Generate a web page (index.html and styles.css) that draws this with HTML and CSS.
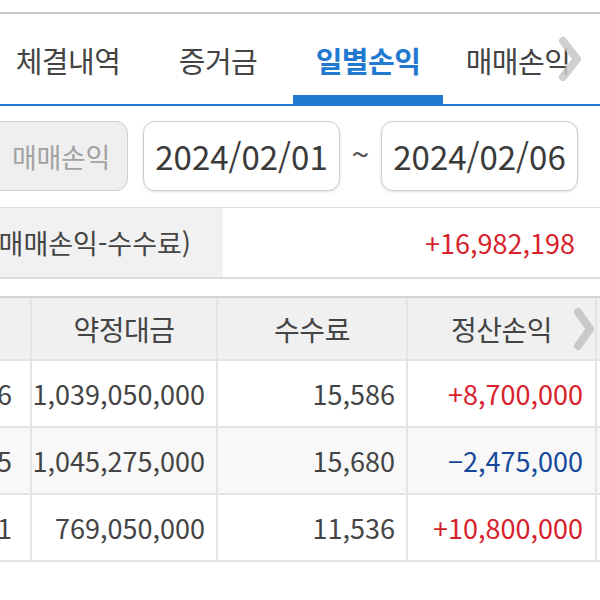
FILE: index.html
```html
<!DOCTYPE html>
<html lang="ko">
<head>
<meta charset="utf-8">
<link rel="stylesheet" href="styles.css">
</head>
<body>
<div class="page">
  <div class="topgap"></div>
  <nav class="tabs">
    <div class="tab-strip">
      <div class="tab">체결내역</div>
      <div class="tab">증거금</div>
      <div class="tab active">일별손익</div>
      <div class="tab">매매손익</div>
    </div>
    <svg class="tab-more" width="26" height="46" viewBox="0 0 26 46"><polyline points="6,5 20,23 6,41" fill="none" stroke="#c8c8c8" stroke-width="8" stroke-linecap="round" stroke-linejoin="round" opacity="0.85"/></svg>
  </nav>

  <div class="date-row">
    <div class="kind-btn"><span>매매손익</span></div>
    <div class="date-box">2024/02/01</div>
    <div class="tilde">~</div>
    <div class="date-box">2024/02/06</div>
  </div>

  <div class="summary">
    <div class="sum-label"><span>정산손익(매매손익-수수료)</span></div>
    <div class="sum-value up">+16,982,198</div>
  </div>

  <div class="table-wrap">
    <div class="grid">
      <div class="cell head first"></div>
      <div class="cell head">약정대금</div>
      <div class="cell head">수수료</div>
      <div class="cell head">정산손익</div>
      <div class="cell head edge"></div>

      <div class="cell first"><span>2024/02/06</span></div>
      <div class="cell num">1,039,050,000</div>
      <div class="cell num">15,586</div>
      <div class="cell num up">+8,700,000</div>
      <div class="cell edge"></div>

      <div class="cell first alt"><span>2024/02/05</span></div>
      <div class="cell num alt">1,045,275,000</div>
      <div class="cell num alt">15,680</div>
      <div class="cell num alt down">−2,475,000</div>
      <div class="cell edge alt"></div>

      <div class="cell first"><span>2024/02/01</span></div>
      <div class="cell num">769,050,000</div>
      <div class="cell num">11,536</div>
      <div class="cell num up">+10,800,000</div>
      <div class="cell edge"></div>
    </div>
    <svg class="col-more" width="24" height="42" viewBox="0 0 24 42"><polyline points="6,4 18,21 6,38" fill="none" stroke="#c4c4c4" stroke-width="8" stroke-linecap="round" stroke-linejoin="round" opacity="0.9"/></svg>
  </div>
</div>
</body>
</html>
```
FILE: styles.css
```css
* { box-sizing: border-box; }
html, body { margin: 0; padding: 0; background: #fff; }
body {
  width: 600px;
  height: 600px;
  overflow: hidden;
  font-family: "Noto Sans CJK KR", "Noto Sans", sans-serif;
  color: #444;
}
.page { width: 600px; }
.topgap { height: 12px; }

.tabs {
  position: relative;
  height: 94px;
  border-top: 2px solid #c8c8c8;
  border-bottom: 2px solid #2079d0;
  overflow: hidden;
}
.tab-strip {
  display: flex;
  height: 100%;
  margin-left: -7px;
}
.tab {
  flex: 0 0 150px;
  display: flex;
  align-items: center;
  justify-content: center;
  padding-top: 2px;
  font-size: 29px;
  letter-spacing: -0.5px;
  color: #444;
}
.tab.active {
  color: #1f7ad0;
  font-weight: 700;
  box-shadow: inset 0 -9px 0 #2079d0;
}
.tab-more {
  position: absolute;
  right: 17px;
  top: 22px;
}

.date-row {
  display: flex;
  align-items: center;
  height: 70px;
  margin-top: 15px;
  margin-left: -12px;
}
.kind-btn {
  width: 140px;
  height: 70px;
  border: 1px solid #cfcfcf;
  border-radius: 12px;
  background: #efefef;
  display: flex;
  align-items: center;
  padding-left: 23px;
  font-size: 27px;
  letter-spacing: -0.3px;
  color: #a2a2a2;
  margin-right: 15px;
}
.date-box {
  width: 197px;
  height: 70px;
  border: 1px solid #cdcdcd;
  border-radius: 12px;
  background: #fff;
  box-shadow: 0 1px 3px rgba(0,0,0,0.12);
  display: flex;
  align-items: center;
  justify-content: center;
  font-size: 33px;
  color: #3a3a3a;
}
.tilde {
  width: 41px;
  text-align: center;
  font-size: 32px;
  line-height: 1;
  padding-bottom: 6px;
  color: #555;
}

.summary {
  display: flex;
  height: 72px;
  margin-top: 16px;
  border-top: 1px solid #dedede;
  border-bottom: 2px solid #dcdcdc;
}
.sum-label {
  width: 223px;
  background: #f1f1f1;
  display: flex;
  justify-content: flex-end;
  align-items: center;
  overflow: hidden;
  white-space: nowrap;
  padding-right: 32px;
  font-size: 27px;
  letter-spacing: 0;
  color: #444;
}
.sum-value {
  flex: 1;
  display: flex;
  align-items: center;
  justify-content: flex-end;
  padding-right: 25px;
  font-size: 27px;
}
.up { color: #d7212b; }
.down { color: #16499a; }

.table-wrap {
  position: relative;
  margin-top: 17px;
}
.grid {
  display: grid;
  grid-template-columns: 32px 186px 190px 189px 3px;
  grid-template-rows: 63px 67px 67px 67px;
  border-top: 2px solid #d4d4d4;
}
.cell {
  border-right: 2px solid #e4e4e4;
  border-bottom: 2px solid #e4e4e4;
  display: flex;
  align-items: center;
  white-space: nowrap;
  overflow: hidden;
  font-size: 27px;
  color: #444;
}
.cell.edge { border-right: 0; }
.head {
  background: #f0f0f0;
  justify-content: center;
  font-size: 28px;
  letter-spacing: -0.5px;
}
.first {
  justify-content: flex-end;
  padding-right: 18px;
}
.num {
  justify-content: flex-end;
  padding-right: 11px;
}
.alt { background: #f8f8f8; }
.cell.num.up, .cell.num.down { padding-right: 12px; }
.cell.num.up { color: #d7212b; }
.cell.num.down { color: #16499a; }
.col-more {
  position: absolute;
  left: 572px;
  top: 12px;
}
```
